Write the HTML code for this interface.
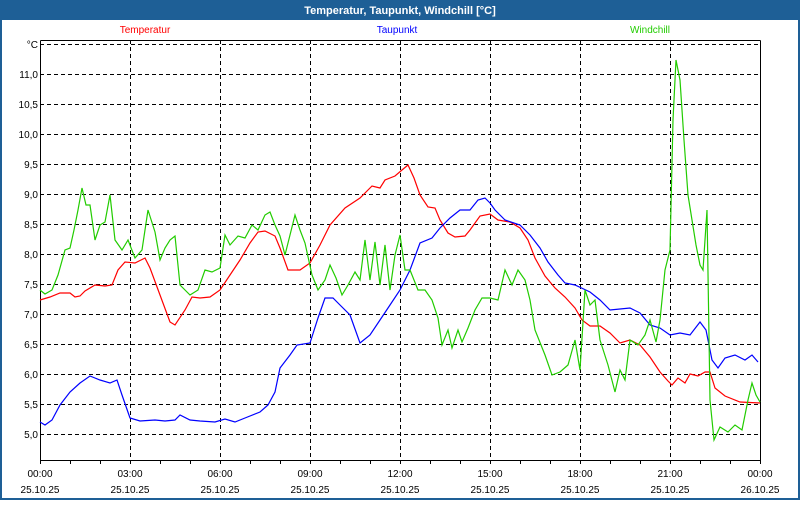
<!DOCTYPE html>
<html><head><meta charset="utf-8"><style>
html,body{margin:0;padding:0;background:#fff;}
body{width:800px;height:500px;overflow:hidden;font-family:"Liberation Sans",sans-serif;}
</style></head><body>
<svg width="800" height="500" xmlns="http://www.w3.org/2000/svg" font-family="Liberation Sans, sans-serif">
<rect x="0" y="0" width="800" height="500" fill="#1e5f96"/>
<rect x="2" y="20" width="796" height="478" fill="#fff"/>
<text x="400" y="14" fill="#fff" font-size="11" font-weight="bold" text-anchor="middle">Temperatur, Taupunkt, Windchill [°C]</text>
<text x="145" y="33" fill="#ff0000" font-size="10" text-anchor="middle">Temperatur</text>
<text x="397" y="33" fill="#0000ff" font-size="10" text-anchor="middle">Taupunkt</text>
<text x="650" y="33" fill="#22cc00" font-size="10" text-anchor="middle">Windchill</text>
<g stroke="#000" stroke-width="1" stroke-dasharray="4,3" shape-rendering="crispEdges">
<line x1="40" x2="760" y1="44.5" y2="44.5"/><line x1="40" x2="760" y1="74.5" y2="74.5"/><line x1="40" x2="760" y1="104.5" y2="104.5"/><line x1="40" x2="760" y1="134.5" y2="134.5"/><line x1="40" x2="760" y1="164.5" y2="164.5"/><line x1="40" x2="760" y1="194.5" y2="194.5"/><line x1="40" x2="760" y1="224.5" y2="224.5"/><line x1="40" x2="760" y1="254.5" y2="254.5"/><line x1="40" x2="760" y1="284.5" y2="284.5"/><line x1="40" x2="760" y1="314.5" y2="314.5"/><line x1="40" x2="760" y1="344.5" y2="344.5"/><line x1="40" x2="760" y1="374.5" y2="374.5"/><line x1="40" x2="760" y1="404.5" y2="404.5"/><line x1="40" x2="760" y1="434.5" y2="434.5"/>
<line x1="130.5" x2="130.5" y1="40" y2="460"/><line x1="220.5" x2="220.5" y1="40" y2="460"/><line x1="310.5" x2="310.5" y1="40" y2="460"/><line x1="400.5" x2="400.5" y1="40" y2="460"/><line x1="490.5" x2="490.5" y1="40" y2="460"/><line x1="580.5" x2="580.5" y1="40" y2="460"/><line x1="670.5" x2="670.5" y1="40" y2="460"/>
</g>
<g stroke="#000" stroke-width="1" shape-rendering="crispEdges" fill="none">
<polyline points="40.5,40.5 40.5,460.5 760.5,460.5 760.5,40.5"/>
<line x1="40.5" x2="760.5" y1="40.5" y2="40.5"/>
<path d="M40.5 460v4M70.5 460v4M100.5 460v4M130.5 460v4M160.5 460v4M190.5 460v4M220.5 460v4M250.5 460v4M280.5 460v4M310.5 460v4M340.5 460v4M370.5 460v4M400.5 460v4M430.5 460v4M460.5 460v4M490.5 460v4M520.5 460v4M550.5 460v4M580.5 460v4M610.5 460v4M640.5 460v4M670.5 460v4M700.5 460v4M730.5 460v4M760.5 460v4"/>
</g>
<g font-size="10" fill="#000" text-anchor="end">
<text x="38" y="48">°C</text><text x="38" y="78">11,0</text><text x="38" y="108">10,5</text><text x="38" y="138">10,0</text><text x="38" y="168">9,5</text><text x="38" y="198">9,0</text><text x="38" y="228">8,5</text><text x="38" y="258">8,0</text><text x="38" y="288">7,5</text><text x="38" y="318">7,0</text><text x="38" y="348">6,5</text><text x="38" y="378">6,0</text><text x="38" y="408">5,5</text><text x="38" y="438">5,0</text>
</g>
<g font-size="10" fill="#000" text-anchor="middle">
<text x="40" y="477">00:00</text><text x="40" y="493">25.10.25</text>
<text x="130" y="477">03:00</text><text x="130" y="493">25.10.25</text>
<text x="220" y="477">06:00</text><text x="220" y="493">25.10.25</text>
<text x="310" y="477">09:00</text><text x="310" y="493">25.10.25</text>
<text x="400" y="477">12:00</text><text x="400" y="493">25.10.25</text>
<text x="490" y="477">15:00</text><text x="490" y="493">25.10.25</text>
<text x="580" y="477">18:00</text><text x="580" y="493">25.10.25</text>
<text x="670" y="477">21:00</text><text x="670" y="493">25.10.25</text>
<text x="760" y="477">00:00</text><text x="760" y="493">26.10.25</text>
</g>
<g fill="none" stroke-width="1.2">
<polyline stroke="#ff0000" points="40,300 50,297 60,293 70,293 75,297 80,296 85,291 95,285 105,286 112,285 118,270 125,262 135,263 145,258 150,268 160,295 170,322 175,325 185,310 192,297 200,298 210,297 220,290 230,275 240,260 250,243 258,232 265,231 275,236 280,248 288,270 300,270 310,263 320,245 330,225 345,208 360,198 372,186 380,188 385,180 395,176 402,170 408,165 414,178 420,195 428,207 435,208 440,220 448,233 455,237 465,236 470,230 480,216 490,214 498,220 510,222 520,228 528,240 535,258 545,276 555,288 565,297 575,308 582,320 590,326 600,326 610,333 620,343 630,340 640,345 650,357 660,372 668,381 672,385 678,378 685,383 690,374 698,376 705,372 710,372 715,388 725,396 740,402 760,403"/>
<polyline stroke="#0000ff" points="40,422 45,425 52,420 60,405 70,392 80,383 90,376 100,380 110,383 117,380 122,395 130,418 140,421 155,420 165,421 175,420 180,415 190,420 200,421 215,422 225,419 235,422 245,418 260,412 268,405 275,392 280,368 290,355 297,345 310,343 318,318 325,298 333,298 340,305 350,315 360,343 370,335 380,320 390,305 400,290 410,270 420,243 432,238 440,228 450,218 460,210 470,210 478,200 485,198 490,203 495,210 505,220 520,225 530,235 540,248 548,262 558,275 565,283 575,285 590,292 600,300 610,310 630,308 640,313 650,325 660,328 670,335 680,333 690,335 700,322 706,330 712,360 718,368 725,358 735,355 745,360 752,355 758,362"/>
<polyline stroke="#22cc00" points="40,290 45,294 52,290 58,275 65,250 70,248 74,230 78,210 82,188 86,205 90,205 95,240 100,225 105,222 110,195 115,240 122,250 128,240 135,258 142,250 148,210 155,232 160,260 165,248 170,240 175,236 180,285 185,290 190,295 198,290 205,270 212,272 220,268 225,235 230,245 238,236 245,238 252,225 258,230 265,215 270,212 275,225 280,236 285,255 290,235 295,215 300,230 305,243 312,275 318,290 325,280 330,265 336,278 342,295 348,285 355,272 360,280 365,240 370,280 375,242 380,285 385,245 390,290 395,255 400,235 405,270 410,270 418,290 425,290 432,300 438,318 442,345 448,330 452,348 458,330 462,342 468,328 475,310 482,298 490,298 498,300 505,270 512,285 518,270 525,280 530,300 535,330 545,355 552,375 560,372 568,365 575,340 580,370 585,290 590,305 595,300 600,340 608,365 615,392 620,370 625,380 630,340 638,345 645,335 650,320 656,342 660,320 665,270 670,250 673,120 676,60 680,80 684,140 688,195 692,220 696,245 700,265 703,270 707,210 710,400 714,440 720,427 728,432 735,425 742,430 748,400 752,383 756,395 760,402"/>
</g>
</svg>
</body></html>
